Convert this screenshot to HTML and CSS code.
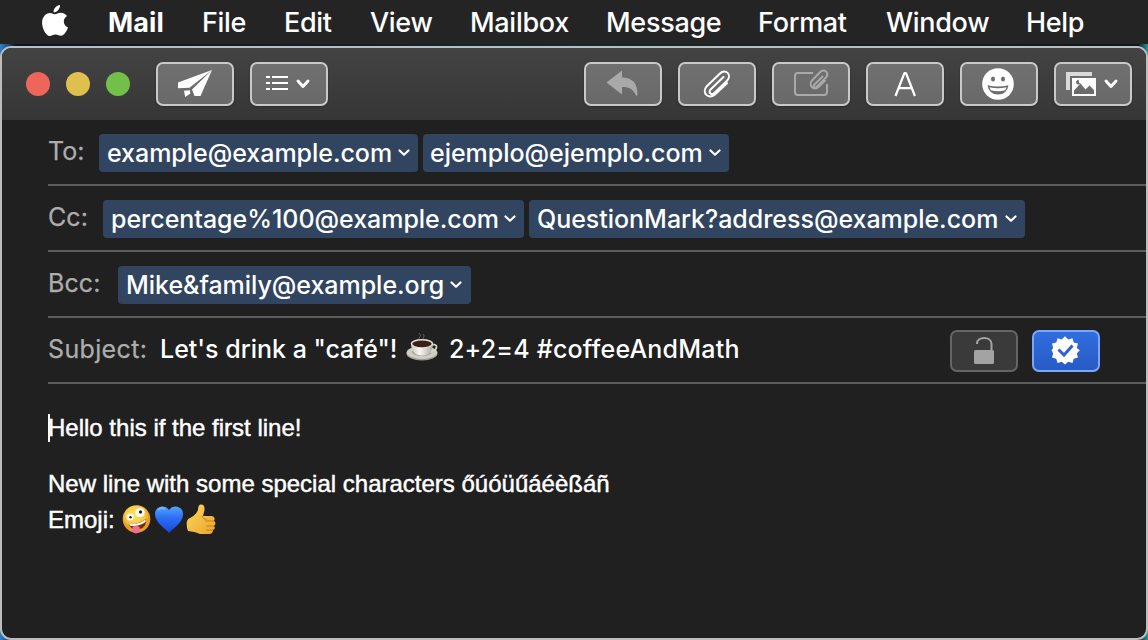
FILE: index.html
```
<!DOCTYPE html>
<html lang="en">
<head>
<meta charset="utf-8">
<title>Mail</title>
<link rel="stylesheet" href="styles.css">
</head>
<body>
<div class="desktop">
  <nav class="menubar">
    <svg class="apple" width="28" height="34" viewBox="0 0 28 34"><path d="M19 1C19.400 4.500 16 8.500 12.600 8.300C12.200 5 15.600 1.300 19 1ZM14 10.300C15.500 10.300 17.200 8.700 20 8.800C22.500 8.900 24.700 10 26 12.100C21.300 15 22 21.500 27 23.600C25.900 26.800 23.200 31.800 20.200 31.800C18 31.800 17.200 30.500 14.500 30.500C11.700 30.500 10.800 31.900 8.600 31.900C5.400 31.900 1.100 25 1.100 18.900C1.100 12.700 4.900 9 8.900 8.900C11.300 8.900 12.700 10.300 14 10.300Z"/></svg>
    <span class="menu-item menu-app">Mail</span>
    <span class="menu-item menu-file">File</span>
    <span class="menu-item menu-edit">Edit</span>
    <span class="menu-item menu-view">View</span>
    <span class="menu-item menu-mailbox">Mailbox</span>
    <span class="menu-item menu-message">Message</span>
    <span class="menu-item menu-format">Format</span>
    <span class="menu-item menu-window">Window</span>
    <span class="menu-item menu-help">Help</span>
  </nav>
  <main class="window">
    <header class="toolbar">
      <div class="lights"><i class="light close"></i><i class="light minimize"></i><i class="light zoom"></i></div>
      <button class="tool"><svg width="74" height="40" viewBox="0 0 74 40"><path class="solid" d="M54 6L20 18.500V24.300L31.500 23.800ZM54 6L34 25.500L36.500 32H42.500ZM26 26.800L31.800 26.300L32.400 29.500L27.200 33Z"/></svg></button>
      <button class="tool"><svg width="74" height="40" viewBox="0 0 74 40"><path class="line" d="M14 13H18M14 19H18M14 25H18M20 13H36M20 19H36M20 25H36"/><path class="line thick" d="M46 17L51 22.500L56 17"/></svg></button>
      <span class="spacer"></span>
      <button class="tool"><svg width="74" height="40" viewBox="0 0 74 40"><path class="dim-fill" d="M20.500 18.500L36 6.500V13.500C46 13.500 52 19 51.500 31.500H50C47 25 43 22.800 36 23V30.500Z"/></svg></button>
      <button class="tool"><svg width="74" height="40" viewBox="0 0 74 40"><path class="line clip" transform="translate(-1 0)" d="M44.500 13L31.800 25.200C28.500 28.500 32.500 31.500 35 29.200L48 16.700C53.500 11 46.500 4 41 9.500L28 22C22 28.500 29.500 36.500 36.500 30L48 19.200"/></svg></button>
      <button class="tool"><svg width="74" height="40" viewBox="0 0 74 40"><path class="dim-line" d="M39 9H24Q21 9 21 12V28Q21 31 24 31H50Q53 31 53 28V20"/><path class="dim-line" d="M49 12L40.500 20.500C38.500 22.600 41 24.500 42.600 23L51.500 14C56 9.300 50.500 3.700 46 8.200L38.500 16C33.500 21 39.500 28 45 22.500L51.500 16"/></svg></button>
      <button class="tool"><svg width="74" height="40" viewBox="0 0 74 40"><path class="line letter" d="M27.500 32L36.400 9.200H38L46.900 32M30.800 24.200H43.600"/></svg></button>
      <button class="tool"><svg width="74" height="40" viewBox="0 0 74 40"><circle class="solid" cx="36" cy="20" r="15.800"/><ellipse class="hole" cx="31" cy="15" rx="2" ry="2.500"/><ellipse class="hole" cx="41" cy="15" rx="2" ry="2.500"/><path class="hole" d="M25.500 21.200Q36 24 46.500 21.200Q45 30.500 36 30.500Q27 30.500 25.500 21.200Z"/><path class="solid" d="M27.500 23.200Q36 25.200 44.500 23.200L43.300 26.200Q36 28.300 28.700 26.200Z"/></svg></button>
      <button class="tool"><svg width="74" height="40" viewBox="0 0 74 40"><path class="backphoto" d="M10 8H36V12H14V26H10Z"/><path class="solid" fill-rule="evenodd" d="M16 14H40V32H16ZM18 30H38V26L33.500 21.500L29.500 25.500L24.500 19.500L18 26.500Z"/><path class="hole" d="M23 15.500Q19 16.500 20.500 19.700Q22 21.200 24.700 19.700Q22 19 23 15.500Z"/><path class="line thick" d="M50 17L55 22.500L60 17"/></svg></button>
    </header>
    <section class="fields">
      <div class="field">
        <label class="label-to">To:</label>
        <span class="chip chip-example"><span>example@example.com</span><svg width="12" height="8" viewBox="0 0 12 8"><path d="M1.500 1.500L6 5.700L10.500 1.500"/></svg></span>
        <span class="chip chip-ejemplo"><span>ejemplo@ejemplo.com</span><svg width="12" height="8" viewBox="0 0 12 8"><path d="M1.500 1.500L6 5.700L10.500 1.500"/></svg></span>
      </div>
      <div class="field">
        <label class="label-cc">Cc:</label>
        <span class="chip chip-percent"><span>percentage%100@example.com</span><svg width="12" height="8" viewBox="0 0 12 8"><path d="M1.500 1.500L6 5.700L10.500 1.500"/></svg></span>
        <span class="chip chip-question"><span>QuestionMark?address@example.com</span><svg width="12" height="8" viewBox="0 0 12 8"><path d="M1.500 1.500L6 5.700L10.500 1.500"/></svg></span>
      </div>
      <div class="field">
        <label class="label-bcc">Bcc:</label>
        <span class="chip chip-family"><span>Mike&amp;family@example.org</span><svg width="12" height="8" viewBox="0 0 12 8"><path d="M1.500 1.500L6 5.700L10.500 1.500"/></svg></span>
      </div>
      <div class="field">
        <label class="label-subject">Subject:</label>
        <span class="subject subject-start">Let's drink a "café"!</span>
        <svg class="coffee" width="34" height="30" viewBox="0 0 34 30">
          <defs><linearGradient id="cup"><stop offset="0" stop-color="#c9c7c1"/><stop offset=".4" stop-color="#f8f7f3"/><stop offset="1" stop-color="#aaa8a0"/></linearGradient></defs>
          <ellipse cx="16" cy="21.500" rx="15.500" ry="7" fill="#9c9b92"/><ellipse cx="16" cy="20.500" rx="15.300" ry="6.500" fill="#cfcdc5"/><ellipse cx="16" cy="20" rx="10" ry="4" fill="#a5a298"/>
          <path d="M25 13.500C32 10 33 18 24 20" fill="none" stroke="#d4d2cb" stroke-width="1.800"/>
          <path d="M5 11.500C5 19 9 23.500 16 23.500S27 19 27 11.500Z" fill="url(#cup)"/><ellipse cx="16" cy="11.500" rx="11.200" ry="4.500" fill="#e6e3db"/><ellipse cx="16" cy="11.800" rx="9.700" ry="3.400" fill="#392116"/>
          <path d="M14 9C10 6 17 5 13 1M18 9C15 6 20 5 17 2" fill="none" stroke="#aaa" stroke-opacity=".45"/>
        </svg>
        <span class="subject subject-end">2+2=4 #coffeeAndMath</span>
        <span class="spacer"></span>
        <button class="security lock"><svg width="64" height="38" viewBox="0 0 64 38"><path d="M25 12V11.500C25 4 39.500 4 39.500 12V20" fill="none" stroke="#a3a3a3" stroke-width="2"/><rect x="22" y="18" width="20" height="14" rx="1.500" fill="#a3a3a3"/></svg></button>
        <button class="security signed"><svg width="64" height="38" viewBox="0 0 64 38"><path fill="#fff" d="M31 4.300L34.300 7.500L38.500 6.200L39.700 10.500L44 11.600L42.800 16L45.800 18.300L42.800 21.500L44 25.500L39.700 26.800L38.500 31L34.300 29.800L31 32.500L27.700 29.800L23.500 31L22.300 26.800L18 25.500L19.200 21.500L17.500 18.300L19.200 16L18 11.600L22.300 10.500L23.500 6.200L27.700 7.500Z"/><path d="M24.500 17.500L30 23L38.500 13.500" fill="none" stroke="#2c62d2" stroke-width="3"/></svg></button>
      </div>
    </section>
    <article class="message">
      <p class="line-one"><i class="caret"></i>Hello this if the first line!</p>
      <p class="line-two">New line with some special characters őúóüűáéèßáñ</p>
      <p class="line-emoji"><span>Emoji:</span>
        <svg width="94" height="32" viewBox="0 0 94 32">
          <defs>
            <radialGradient id="face" cx=".45" cy=".35"><stop offset="0" stop-color="#ffe36b"/><stop offset=".7" stop-color="#fac93d"/><stop offset="1" stop-color="#e99d24"/></radialGradient>
            <linearGradient id="heart" x2="0" y2="1"><stop offset="0" stop-color="#52a3ff"/><stop offset=".45" stop-color="#2b6df5"/><stop offset="1" stop-color="#1749d5"/></linearGradient>
            <linearGradient id="thumb" x2="1" y2="1"><stop offset="0" stop-color="#ffd75c"/><stop offset="1" stop-color="#e9a52c"/></linearGradient>
          </defs>
          <circle cx="14.500" cy="15" r="13.800" fill="url(#face)"/>
          <circle cx="8" cy="13" r="3.500" fill="#fff"/><circle cx="8.500" cy="13.200" r="1.300" fill="#352619"/><circle cx="18" cy="8.500" r="4.600" fill="#fff"/><circle cx="18.500" cy="8" r="1.700" fill="#352619"/>
          <path d="M6.500 20Q16 21 24 15Q25 24 16.500 25.500Q9 26 6.500 20Z" fill="#713013"/><path d="M7 20Q16 21 23.500 15.500L23.700 18Q16 23 8 21.700Z" fill="#fff"/><path d="M10.500 23Q14 20.500 17.500 23L18 27.500Q14 31 10.700 28Z" fill="#f46b94"/>
          <path d="M47 29C43 24 33 19 33 10C33 2 43 0 47 6C51 0 61 2 61 10C61 19 51 24 47 29Z" fill="url(#heart)"/><path d="M36 6Q39 2.500 43 5" fill="none" stroke="#9dcbff" stroke-opacity=".55" stroke-width="2"/>
          <path d="M65 17Q66 14 69 13.500Q74 11 76 6Q76 1 78.500 .5Q83 0 82.500 6L81 12H90Q94 13 92 17Q95 19 92 22Q94 25 91 26Q91 30 87 30H78Q73 27.500 66 27Q64 22 65 17Z" fill="url(#thumb)"/><path d="M92 17H83M92 22H84M91 26H84M80 12Q81 16 85 15" fill="none" stroke="#c97b22" stroke-width="1"/>
        </svg>
      </p>
    </article>
  </main>
</div>
</body>
</html>
```
FILE: styles.css
```
* { box-sizing: border-box; }
body { margin: 0; background: #123; font-family: Inter, sans-serif; color: #fff; }
p { margin: 0; }
button { padding: 0; font: inherit; }
svg { display: block; flex: none; }
.desktop { width: 1148px; height: 640px; overflow: hidden; display: flex; flex-direction: column; background: linear-gradient(to right, #2f80d0 0, #07152b 16px, #102b31 50%, #0b1920 1138px, #28999e); }
.menubar { height: 44px; flex: none; display: flex; align-items: center; padding-left: 41px; margin-bottom: 2px; background: #242424; font-size: 27px; line-height: 44px; font-weight: 500; letter-spacing: -.3px; white-space: nowrap; }
.apple { fill: #fff; margin: -3px 38px 0 0; }
.menu-item { margin-right: 14px; padding-top: 1px; }
.menu-app { width: 80px; font-weight: 700; margin-left: 1px; letter-spacing: .1px; }
.menu-file { width: 68px; }
.menu-edit { width: 72px; }
.menu-view { width: 86px; }
.menu-mailbox { width: 122px; }
.menu-message { width: 138px; }
.menu-format { width: 114px; }
.menu-window { width: 126px; }
.menu-help { width: 60px; }
.window { height: 594px; border: 2px solid #bdbdbd; border-radius: 11px; overflow: hidden; background: #202020; }
.toolbar { height: 72px; display: flex; align-items: center; gap: 16px; padding: 0 14px 0 24px; background: linear-gradient(#434343, #363636); }
.lights { display: flex; gap: 16px; margin-right: 10px; }
.light { width: 24px; height: 24px; border-radius: 50%; }
.close { background: #ee655c; }
.minimize { background: #dfc04f; }
.zoom { background: #74bf4a; }
.tool { width: 78px; height: 44px; border: 2px solid #c9c9c9; border-radius: 7px; background: linear-gradient(#707070, #696969); box-shadow: 0 1px 2px #2228; }
.spacer { flex: 1; }
.solid { fill: #fff; }
.hole { fill: #6c6c6c; }
.backphoto { fill: #dadada; }
.line { fill: none; stroke: #fff; stroke-width: 2; }
.thick { stroke-width: 3; stroke-linecap: round; stroke-linejoin: round; }
.clip { stroke-linecap: round; stroke-width: 2; }
.letter { stroke-width: 2.3; stroke-linejoin: bevel; }
.dim-fill { fill: #a9a9a9; }
.dim-line { fill: none; stroke: #a9a9a9; stroke-width: 2; }
.fields { padding-left: 46px; font-size: 25px; font-weight: 500; white-space: nowrap; }
.field { height: 66px; border-bottom: 2px solid #5d5d5d; display: flex; align-items: center; padding-top: 2px; }
.field label { color: #adadad; font-weight: 400; margin-top: -4px; flex: none; -webkit-text-stroke: .25px #adadad; letter-spacing: .1px; }
.label-to { width: 51px; }
.label-cc { width: 55px; }
.label-bcc { width: 70px; }
.field .label-subject { width: 112px; letter-spacing: .35px; }
.chip { height: 38px; display: flex; align-items: center; justify-content: space-between; padding: 0 8px 0 8px; margin-right: 5px; background: #314560; border-radius: 4px; flex: none; letter-spacing: -.03px; }
.chip svg path { fill: none; stroke: #fff; stroke-width: 2.2; stroke-linecap: round; stroke-linejoin: round; }
.chip-example { width: 319px; }
.chip-ejemplo { width: 306px; padding-left: 7px; }
.chip-percent { width: 421px; }
.chip-question { width: 496px; }
.chip-family { width: 353px; padding-right: 9px; }
.subject { margin-top: -4px; flex: none; }
.subject-start { width: 246px; }
.subject-end { letter-spacing: .2px; }
.coffee { margin: -8px 9px 0 0; }
.security { width: 68px; height: 42px; border: 2px solid #656565; border-radius: 7px; background: #3a3a3a; margin-right: 14px; flex: none; }
.signed { border-color: #7ba6ff; background: linear-gradient(#306ee0, #285ac3); margin-right: 46px; }
.message { padding: 26px 0 0 46px; font: 24px/36px "Liberation Sans", Arial, sans-serif; -webkit-text-stroke: .45px #fff; }
.line-one { position: relative; margin-bottom: 20px; }
.caret { position: absolute; left: 0; top: 4px; width: 2px; height: 28px; background: #fff; }
.line-emoji { display: flex; align-items: center; gap: 7px; }
```
